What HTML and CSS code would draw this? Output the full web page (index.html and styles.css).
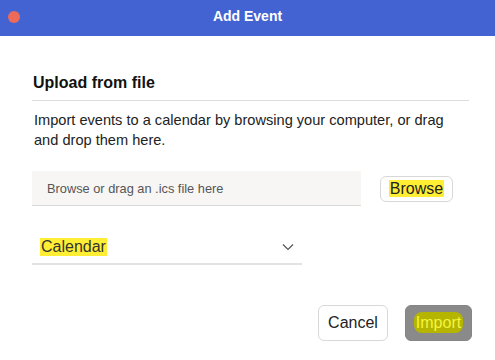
FILE: index.html
```html
<!DOCTYPE html>
<html lang="en">
<head>
    <meta charset="UTF-8">
    <title>Add Event</title>
    <link rel="stylesheet" href="styles.css">
</head>
<body>
    <div class="titlebar">
        <span class="close-dot"></span>
        <h1>Add Event</h1>
        <span></span>
    </div>

    <div class="content">
        <h2>Upload from file</h2>
        <p class="description">Import events to a calendar by browsing your computer, or drag and drop them here.</p>

        <div class="file-row">
            <div class="file-input">Browse or drag an .ics file here</div>
            <button class="btn btn-browse"><span class="mark">Browse</span></button>
        </div>

        <div class="select-box">
            <span class="mark mark-big">Calendar</span>
            <svg class="chevron" viewBox="0 0 12 8" width="12" height="8">
                <path d="M1 1.5l5 5 5-5" fill="none" stroke="#555" stroke-width="1.2"/>
            </svg>
        </div>

        <div class="actions">
            <button class="btn btn-cancel">Cancel</button>
            <button class="btn btn-import"><span class="mark-dark">Import</span></button>
        </div>
    </div>
</body>
</html>
```

FILE: styles.css
```css
* {
    margin: 0;
    padding: 0;
    box-sizing: border-box;
}

body {
    background: #fff;
    color: #1d1d1d;
    font-family: 'Liberation Sans', Arial, sans-serif;
    width: 495px;
    height: 360px;
    overflow: hidden;
}

.titlebar {
    height: 36px;
    background: #4263d1;
    display: grid;
    grid-template-columns: 40px 1fr 40px;
    align-items: center;
}

.close-dot {
    width: 12px;
    height: 12px;
    border-radius: 50%;
    background: #ec6a5a;
    margin: -2px 0 0 8px;
}

.titlebar h1 {
    color: #fff;
    font-size: 14px;
    font-weight: bold;
    text-align: center;
    margin-top: -5px;
}

.content {
    padding: 38px 26px 0 32px;
}

h2 {
    font-size: 16px;
    font-weight: bold;
    color: #111;
    padding: 0 0 8px 1px;
    border-bottom: 1px solid #dcdcdc;
}

.description {
    font-size: 14.6px;
    line-height: 20px;
    color: #222;
    margin: 9px 0 0 2px;
    padding-right: 10px;
}

.file-row {
    display: flex;
    align-items: center;
    margin-top: 21px;
}

.file-input {
    width: 329px;
    height: 35px;
    background: #f7f6f5;
    border-bottom: 1px solid #dadada;
    color: #555;
    font-size: 12.8px;
    padding: 10px 0 0 15px;
}

.btn {
    font-family: inherit;
    border: 1px solid #d8d8d8;
    border-radius: 6px;
    background: #fff;
    color: #222;
    cursor: pointer;
}

.btn-browse {
    margin-left: 19px;
    width: 73px;
    height: 26px;
    font-size: 16px;
}

.mark {
    background: #ffee33;
    padding: 0 1px;
}

.select-box {
    width: 270px;
    height: 33px;
    margin-top: 26px;
    border-bottom: 2px solid #e2e2e2;
    display: flex;
    align-items: center;
    justify-content: space-between;
    padding: 0 8px 2px 8px;
}

.mark-big {
    font-size: 16px;
    color: #333;
}

.actions {
    display: flex;
    justify-content: flex-end;
    gap: 17px;
    margin: 40px -3px 0 0;
}

.btn-cancel {
    width: 70px;
    height: 36px;
    font-size: 16px;
}

.btn-import {
    width: 67px;
    height: 36px;
    font-size: 16px;
    background: #8a8a8a;
    border-color: #858585;
}

.mark-dark {
    background: #b5b500;
    color: #f4f43c;
    border-radius: 8px;
    padding: 2px 2px;
}
```
